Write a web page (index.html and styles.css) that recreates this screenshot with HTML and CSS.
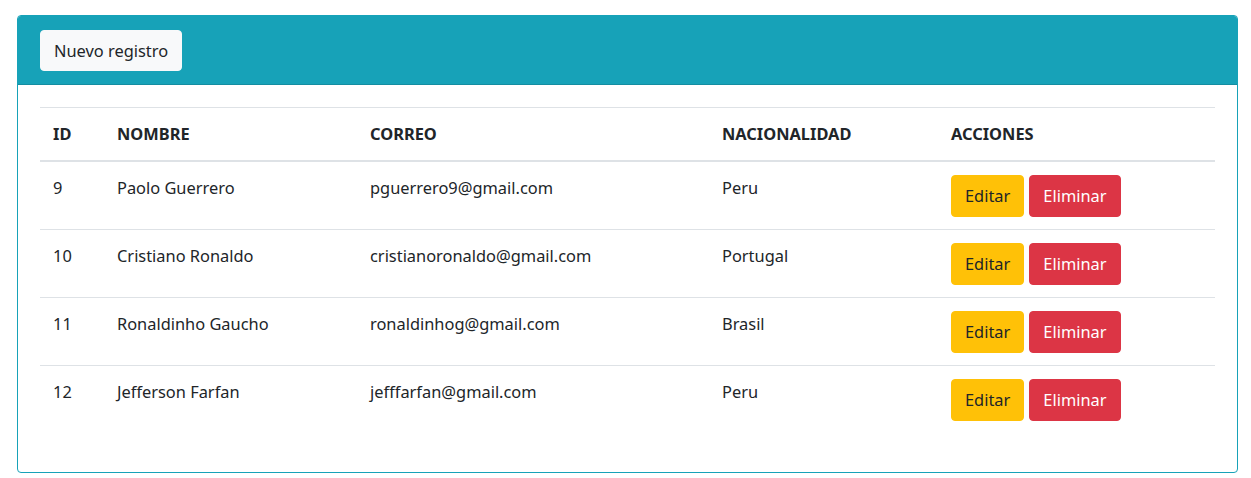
FILE: index.html
```html
<!DOCTYPE html>
<html lang="es">
<head>
<meta charset="utf-8">
<title>Registros</title>
<link rel="stylesheet" href="styles.css">
</head>
<body>
<div class="page">
  <div class="card">
    <div class="card-header">
      <button class="btn btn-light">Nuevo registro</button>
    </div>
    <div class="card-body">
      <table class="table">
        <colgroup>
          <col class="c-id"><col class="c-nombre"><col class="c-correo"><col class="c-nac"><col class="c-acc">
        </colgroup>
        <thead>
          <tr><th>ID</th><th>NOMBRE</th><th>CORREO</th><th>NACIONALIDAD</th><th>ACCIONES</th></tr>
        </thead>
        <tbody>
          <tr><td>9</td><td>Paolo Guerrero</td><td>pguerrero9@gmail.com</td><td>Peru</td><td class="acc"><button class="btn btn-warning">Editar</button><button class="btn btn-danger">Eliminar</button></td></tr>
          <tr><td>10</td><td>Cristiano Ronaldo</td><td>cristianoronaldo@gmail.com</td><td>Portugal</td><td class="acc"><button class="btn btn-warning">Editar</button><button class="btn btn-danger">Eliminar</button></td></tr>
          <tr><td>11</td><td>Ronaldinho Gaucho</td><td>ronaldinhog@gmail.com</td><td>Brasil</td><td class="acc"><button class="btn btn-warning">Editar</button><button class="btn btn-danger">Eliminar</button></td></tr>
          <tr><td>12</td><td>Jefferson Farfan</td><td>jefffarfan@gmail.com</td><td>Peru</td><td class="acc"><button class="btn btn-warning">Editar</button><button class="btn btn-danger">Eliminar</button></td></tr>
        </tbody>
      </table>
    </div>
  </div>
</div>
</body>
</html>
```
FILE: styles.css
```css
* { box-sizing: border-box; }
html, body { margin: 0; padding: 0; background: #fff; }
body {
  font-family: "Noto Sans", "Open Sans", sans-serif;
  font-size: 16.4px;
  line-height: 26px;
  color: #212529;
}
.page { padding: 15px 13px 0 17px; }
.card {
  border: 1px solid #17a2b8;
  border-radius: 4px;
  overflow: hidden;
  background: #fff;
}
.card-header {
  background: #17a2b8;
  padding: 14px 22px 13px;
  border-bottom: 1px solid rgba(0,0,0,.125);
  line-height: 0;
}
.card-body { padding: 22px; }
.btn {
  font-family: inherit;
  font-size: 16.4px;
  line-height: 26px;
  padding: 0 13px;
  border: 1px solid transparent;
  border-radius: 4px;
  height: 42px;
  cursor: pointer;
  vertical-align: top;
}
.btn-light { background: #f8f9fa; border-color: #f8f9fa; color: #212529; height: 41px; }
.btn-warning { background: #ffc107; border-color: #ffc107; color: #212529; }
.btn-danger { background: #dc3545; border-color: #dc3545; color: #fff; }
.acc .btn + .btn { margin-left: 5px; }
.table {
  width: 100%;
  border-collapse: collapse;
  margin-bottom: 17px;
  table-layout: fixed;
}
.c-id { width: 64px; }
.c-nombre { width: 253px; }
.c-correo { width: 352px; }
.c-nac { width: 229px; }
.table th, .table td {
  padding: 13px 13px 12px;
  text-align: left;
  vertical-align: top;
  border-top: 1px solid #dee2e6;
  white-space: nowrap;
}
.table th { font-weight: 700; padding-bottom: 13px; }
.table thead th { border-bottom: 2px solid #dee2e6; }
.table tbody tr:first-child td { border-top: 0; }
.table td.acc { font-size: 0; line-height: 0; }
```
